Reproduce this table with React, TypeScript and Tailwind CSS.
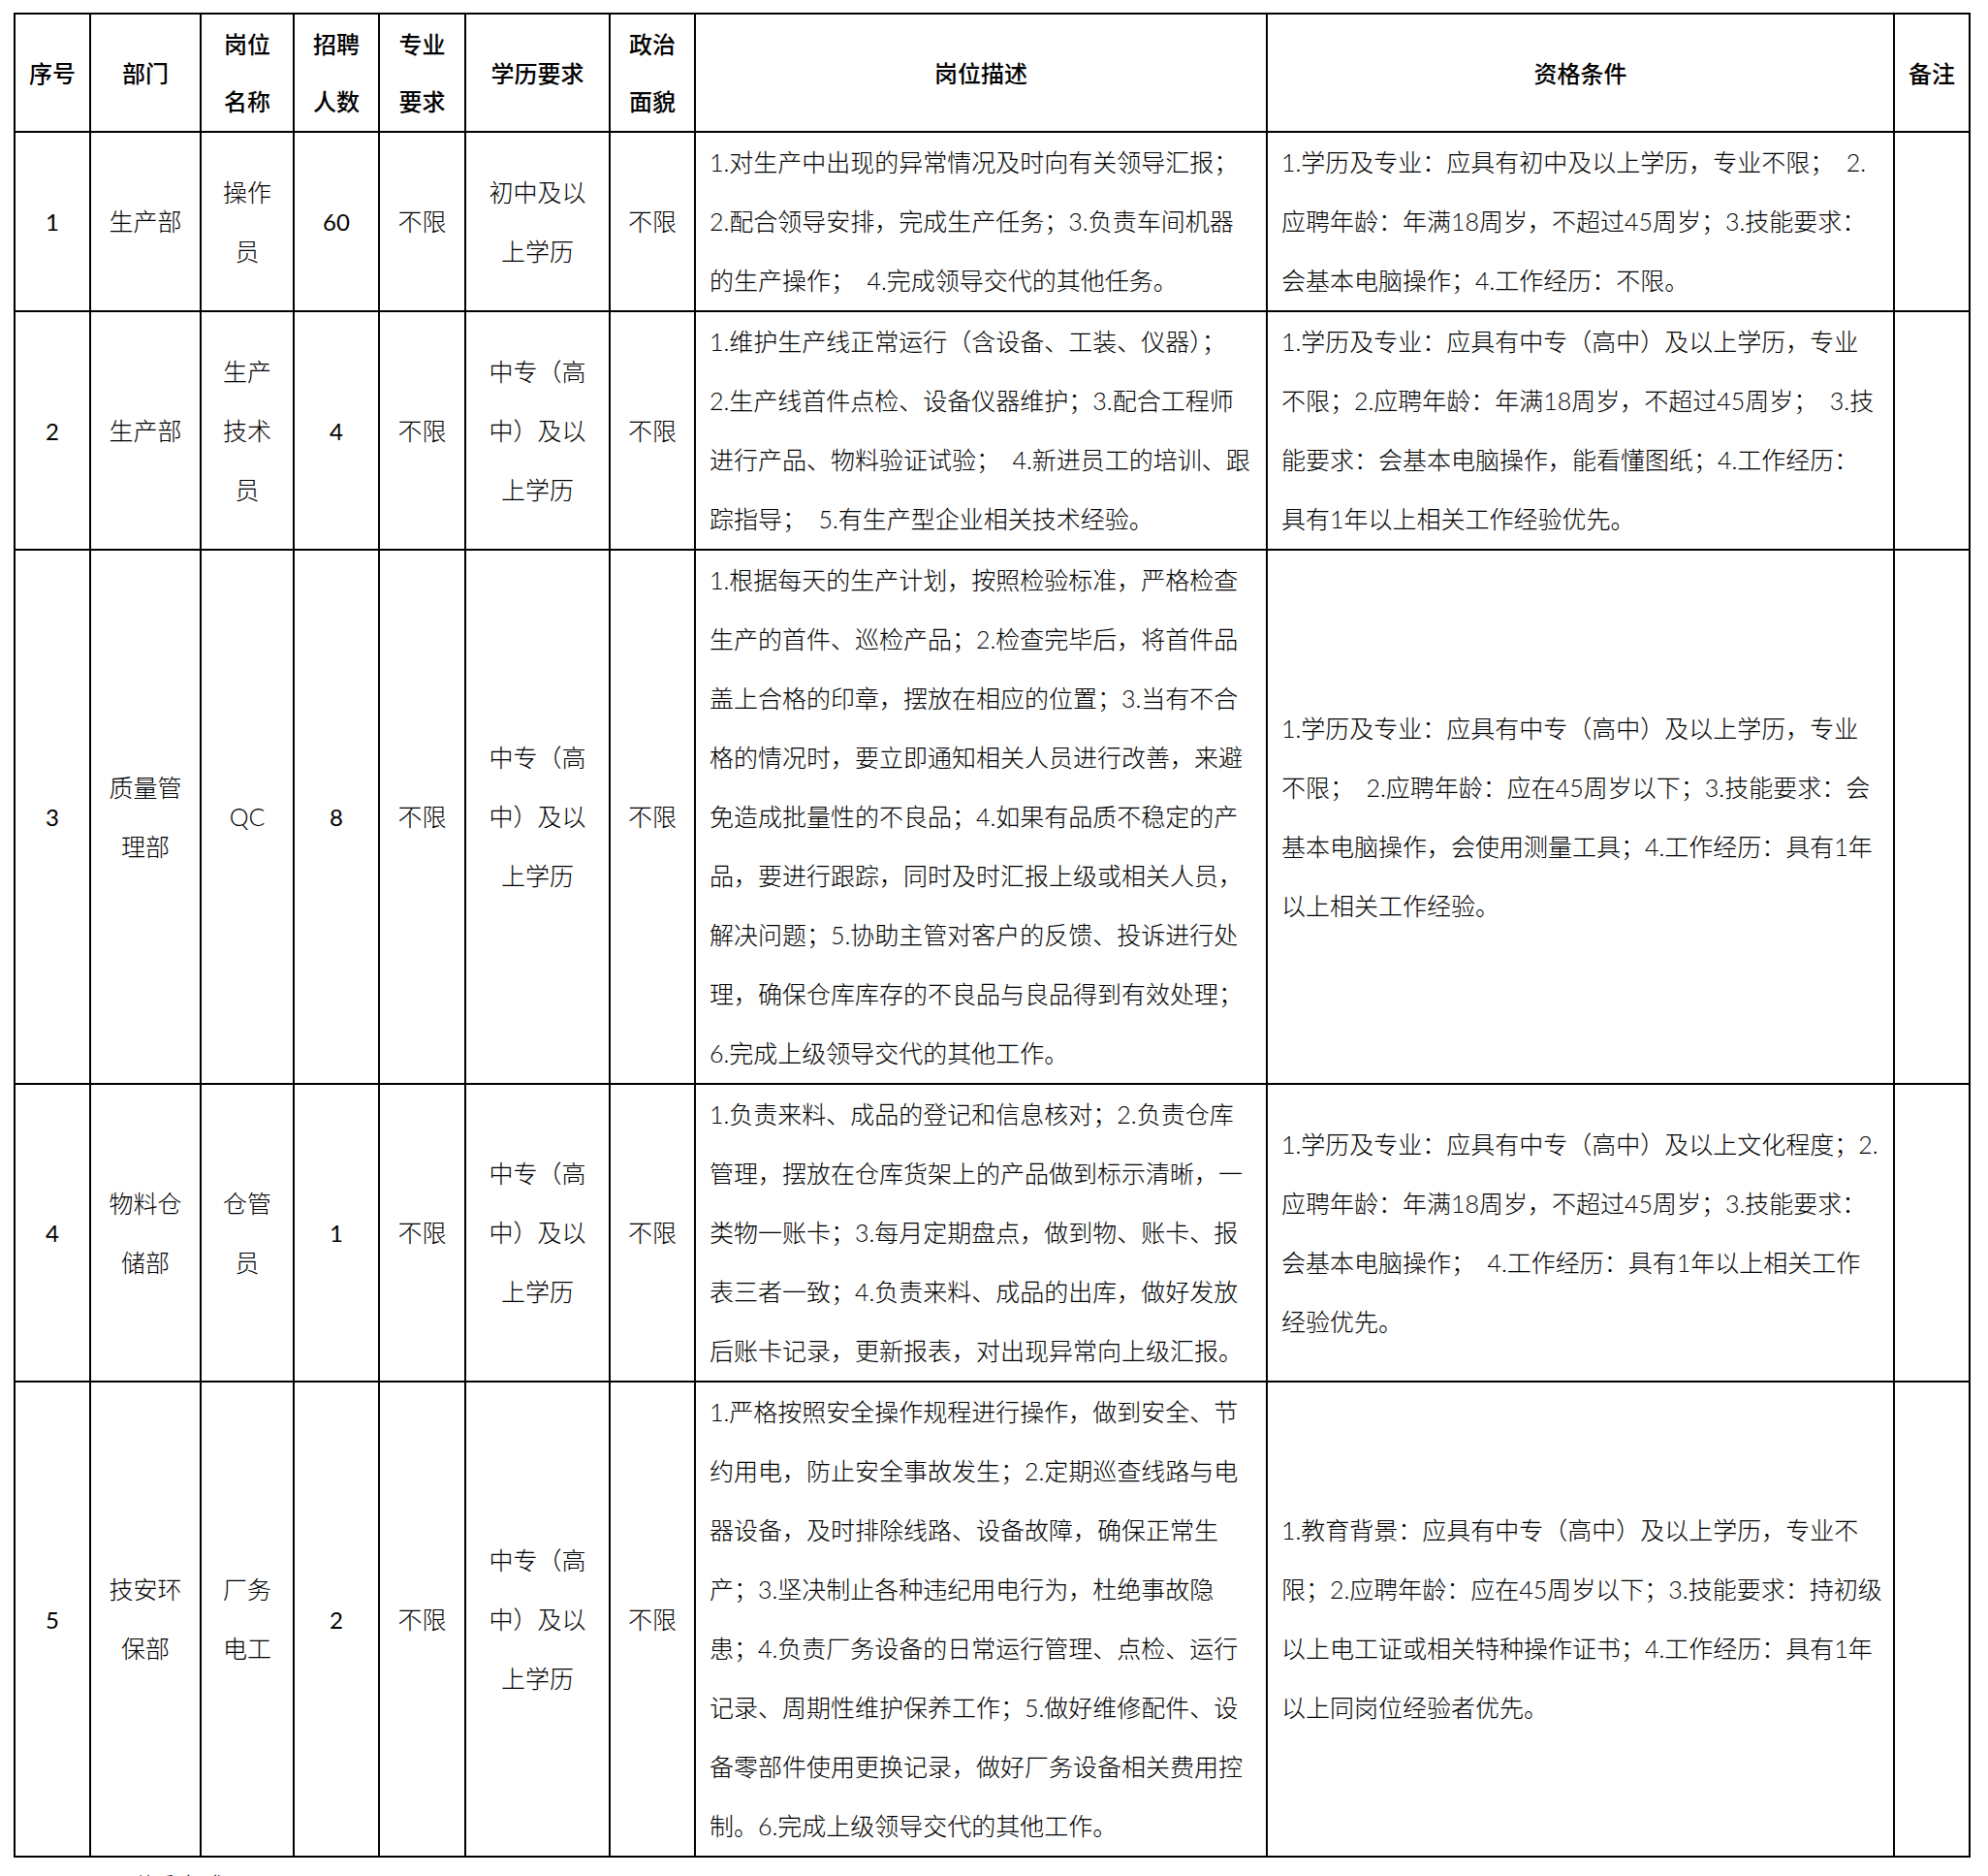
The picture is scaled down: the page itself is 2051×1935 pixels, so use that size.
import React from 'react'

type Row = {
    no: string
    dept: string[]
    post: string[]
    count: string
    major: string
    edu: string[]
    politics: string
    desc: string[]
    qual: string[]
    h: string
}

const rows: Row[] = [
    {
        no: '1',
        dept: ['生产部'],
        post: ['操作', '员'],
        count: '60',
        major: '不限',
        edu: ['初中及以', '上学历'],
        politics: '不限',
        desc: [
            '1.对生产中出现的异常情况及时向有关领导汇报；',
            '2.配合领导安排，完成生产任务；3.负责车间机器',
            '的生产操作；　4.完成领导交代的其他任务。',
        ],
        qual: [
            '1.学历及专业：应具有初中及以上学历，专业不限；　2.',
            '应聘年龄：年满18周岁，不超过45周岁；3.技能要求：',
            '会基本电脑操作；4.工作经历：不限。',
        ],
        h: 'h-[185px]',
    },
    {
        no: '2',
        dept: ['生产部'],
        post: ['生产', '技术', '员'],
        count: '4',
        major: '不限',
        edu: ['中专（高', '中）及以', '上学历'],
        politics: '不限',
        desc: [
            '1.维护生产线正常运行（含设备、工装、仪器）；',
            '2.生产线首件点检、设备仪器维护；3.配合工程师',
            '进行产品、物料验证试验；　4.新进员工的培训、跟',
            '踪指导；　5.有生产型企业相关技术经验。',
        ],
        qual: [
            '1.学历及专业：应具有中专（高中）及以上学历，专业',
            '不限；2.应聘年龄：年满18周岁，不超过45周岁；　3.技',
            '能要求：会基本电脑操作，能看懂图纸；4.工作经历：',
            '具有1年以上相关工作经验优先。',
        ],
        h: 'h-[246px]',
    },
    {
        no: '3',
        dept: ['质量管', '理部'],
        post: ['QC'],
        count: '8',
        major: '不限',
        edu: ['中专（高', '中）及以', '上学历'],
        politics: '不限',
        desc: [
            '1.根据每天的生产计划，按照检验标准，严格检查',
            '生产的首件、巡检产品；2.检查完毕后，将首件品',
            '盖上合格的印章，摆放在相应的位置；3.当有不合',
            '格的情况时，要立即通知相关人员进行改善，来避',
            '免造成批量性的不良品；4.如果有品质不稳定的产',
            '品，要进行跟踪，同时及时汇报上级或相关人员，',
            '解决问题；5.协助主管对客户的反馈、投诉进行处',
            '理，确保仓库库存的不良品与良品得到有效处理；',
            '6.完成上级领导交代的其他工作。',
        ],
        qual: [
            '1.学历及专业：应具有中专（高中）及以上学历，专业',
            '不限；　2.应聘年龄：应在45周岁以下；3.技能要求：会',
            '基本电脑操作，会使用测量工具；4.工作经历：具有1年',
            '以上相关工作经验。',
        ],
        h: 'h-[551px]',
    },
    {
        no: '4',
        dept: ['物料仓', '储部'],
        post: ['仓管', '员'],
        count: '1',
        major: '不限',
        edu: ['中专（高', '中）及以', '上学历'],
        politics: '不限',
        desc: [
            '1.负责来料、成品的登记和信息核对；2.负责仓库',
            '管理，摆放在仓库货架上的产品做到标示清晰，一',
            '类物一账卡；3.每月定期盘点，做到物、账卡、报',
            '表三者一致；4.负责来料、成品的出库，做好发放',
            '后账卡记录，更新报表，对出现异常向上级汇报。',
        ],
        qual: [
            '1.学历及专业：应具有中专（高中）及以上文化程度；2.',
            '应聘年龄：年满18周岁，不超过45周岁；3.技能要求：',
            '会基本电脑操作；　4.工作经历：具有1年以上相关工作',
            '经验优先。',
        ],
        h: 'h-[307px]',
    },
    {
        no: '5',
        dept: ['技安环', '保部'],
        post: ['厂务', '电工'],
        count: '2',
        major: '不限',
        edu: ['中专（高', '中）及以', '上学历'],
        politics: '不限',
        desc: [
            '1.严格按照安全操作规程进行操作，做到安全、节',
            '约用电，防止安全事故发生；2.定期巡查线路与电',
            '器设备，及时排除线路、设备故障，确保正常生',
            '产；3.坚决制止各种违纪用电行为，杜绝事故隐',
            '患；4.负责厂务设备的日常运行管理、点检、运行',
            '记录、周期性维护保养工作；5.做好维修配件、设',
            '备零部件使用更换记录，做好厂务设备相关费用控',
            '制。6.完成上级领导交代的其他工作。',
        ],
        qual: [
            '1.教育背景：应具有中专（高中）及以上学历，专业不',
            '限；2.应聘年龄：应在45周岁以下；3.技能要求：持初级',
            '以上电工证或相关特种操作证书；4.工作经历：具有1年',
            '以上同岗位经验者优先。',
        ],
        h: 'h-[490px]',
    },
]

const headers: string[][] = [
    ['序号'],
    ['部门'],
    ['岗位', '名称'],
    ['招聘', '人数'],
    ['专业', '要求'],
    ['学历要求'],
    ['政治', '面貌'],
    ['岗位描述'],
    ['资格条件'],
    ['备注'],
]

function Lines({ lines }: { lines: string[] }) {
    return (
        <>
            {lines.map((l, i) => (
                <div key={i} className="whitespace-pre">{l}</div>
            ))}
        </>
    )
}

const cell = 'border-2 border-black p-0 align-middle text-center'
const textCell = 'border-2 border-black px-[14px] py-0 align-middle text-left'

export default function App() {
    return (
        <div className="min-h-screen bg-white pl-[14px] pt-[13px] text-black font-['Lato','Noto_Sans_CJK_SC',sans-serif] text-[25px] leading-[61px] font-light">
            <table className="table-fixed border-collapse w-[2017px]">
                <colgroup>
                    <col className="w-[78px]" />
                    <col className="w-[114px]" />
                    <col className="w-[96px]" />
                    <col className="w-[88px]" />
                    <col className="w-[89px]" />
                    <col className="w-[149px]" />
                    <col className="w-[88px]" />
                    <col className="w-[590px]" />
                    <col className="w-[647px]" />
                    <col className="w-[78px]" />
                </colgroup>
                <thead>
                    <tr className="h-[122px]">
                        {headers.map((h, i) => (
                            <th key={i} className={`${cell} font-medium text-[24px] leading-[59px]`}>
                                <Lines lines={h} />
                            </th>
                        ))}
                    </tr>
                </thead>
                <tbody>
                    {rows.map((r) => (
                        <tr key={r.no} className={r.h}>
                            <td className={`${cell} font-normal text-[24px]`}>{r.no}</td>
                            <td className={cell}><Lines lines={r.dept} /></td>
                            <td className={cell}><Lines lines={r.post} /></td>
                            <td className={`${cell} font-normal text-[24px]`}>{r.count}</td>
                            <td className={cell}>{r.major}</td>
                            <td className={cell}><Lines lines={r.edu} /></td>
                            <td className={cell}>{r.politics}</td>
                            <td className={textCell}><Lines lines={r.desc} /></td>
                            <td className={textCell}><Lines lines={r.qual} /></td>
                            <td className={cell}></td>
                        </tr>
                    ))}
                </tbody>
            </table>
            <div className="pl-[118px] pt-[17px] leading-none">联系方式：</div>
        </div>
    )
}
